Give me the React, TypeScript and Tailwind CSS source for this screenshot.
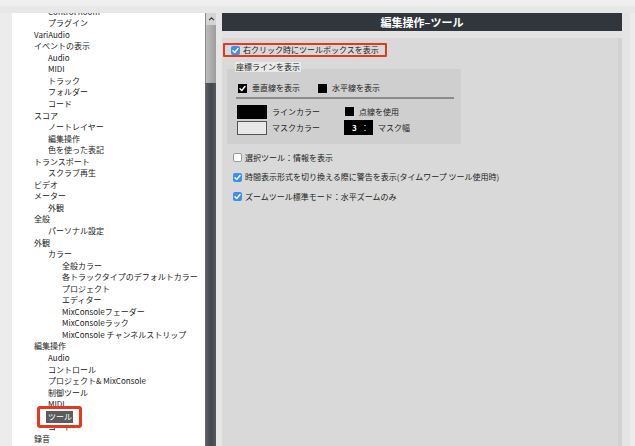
import type { ReactNode } from "react";

const font = { fontFamily: "'Noto Sans CJK JP', 'Noto Sans', sans-serif" };

const treeItems: Array<[string, number]> = [
  ["Control Room", 2],
  ["プラグイン", 2],
  ["VariAudio", 1],
  ["イベントの表示", 1],
  ["Audio", 2],
  ["MIDI", 2],
  ["トラック", 2],
  ["フォルダー", 2],
  ["コード", 2],
  ["スコア", 1],
  ["ノートレイヤー", 2],
  ["編集操作", 2],
  ["色を使った表記", 2],
  ["トランスポート", 1],
  ["スクラブ再生", 2],
  ["ビデオ", 1],
  ["メーター", 1],
  ["外観", 2],
  ["全般", 1],
  ["パーソナル設定", 2],
  ["外観", 1],
  ["カラー", 2],
  ["全般カラー", 3],
  ["各トラックタイプのデフォルトカラー", 3],
  ["プロジェクト", 3],
  ["エディター", 3],
  ["MixConsoleフェーダー", 3],
  ["MixConsoleラック", 3],
  ["MixConsole チャンネルストリップ", 3],
  ["編集操作", 1],
  ["Audio", 2],
  ["コントロール", 2],
  ["プロジェクト& MixConsole", 2],
  ["制御ツール", 2],
  ["MIDI", 2],
  ["ツール", 2],
  ["コード", 2],
  ["録音", 1]
];

const indent: Record<number, string> = {
  1: "pl-[22px]",
  2: "pl-[36px]",
  3: "pl-[50px]"
};

function Check({ color = "white" }: { color?: string }) {
  return (
    <svg viewBox="0 0 10 10" className="h-full w-full">
      <path
        d="M2.2 5.2 L4.2 7.2 L7.8 2.8"
        fill="none"
        stroke={color}
        strokeWidth="1.6"
        strokeLinecap="round"
        strokeLinejoin="round"
      />
    </svg>
  );
}

function BlueBox({ checked }: { checked: boolean }) {
  return checked ? (
    <span className="flex h-[9px] w-[9px] shrink-0 rounded-[2px] bg-[#3d8ef2]">
      <Check />
    </span>
  ) : (
    <span className="h-[9px] w-[9px] shrink-0 rounded-[2px] border border-[#9a9a9a] bg-white" />
  );
}

function OptionRow({ checked, children }: { checked: boolean; children: ReactNode }) {
  return (
    <div className="flex h-[19.5px] items-center gap-[2px] pl-[10px] text-[8px] text-[#222]">
      <BlueBox checked={checked} />
      <span className="ml-[1px]">{children}</span>
    </div>
  );
}

function TreePanel() {
  return (
    <div className="relative h-full w-[193px] overflow-hidden bg-white" style={font}>
      <div className="mt-[-7.4px]">
        {treeItems.map(([label, level], i) => (
          <div
            key={i}
            className={`h-[11.56px] whitespace-nowrap text-[8px] leading-[11.56px] text-[#222] ${indent[level]}`}
          >
            {label}
          </div>
        ))}
      </div>
      <div className="absolute left-[25px] top-[393px] h-[22px] w-[45px] rounded-[3px] border-[3px] border-[#e8361f] bg-white">
        <div className="ml-[6px] mt-[2px] h-[12px] w-[27px] bg-[#5c5c5c] pl-[2px] text-[8px] leading-[12px] text-white">
          ツール
        </div>
      </div>
    </div>
  );
}

function Scrollbar() {
  return (
    <div className="flex h-full w-[11px] flex-col">
      <div className="flex h-[12px] items-center justify-center border-l border-[#8a8a8a] bg-[#d4d4d4] text-[8px] leading-none text-[#333]">
        <svg viewBox="0 0 8 5" className="h-[4px] w-[7px]">
          <path d="M1 4 L4 1 L7 4" fill="none" stroke="#333" strokeWidth="1.3" />
        </svg>
      </div>
      <div className="h-[58px] border-l border-[#8a8a8a] bg-gradient-to-r from-[#bcbcbc] to-[#9c9c9c]" />
      <div className="flex-1 border-l border-[#6a6a6a] bg-gradient-to-r from-[#5a5d63] via-[#44474d] to-[#55585e]" />
    </div>
  );
}

function Legend() {
  return (
    <div className="relative ml-[4px] mt-[12px] h-[75px] w-[234px] rounded-[2px] bg-[#cfcfcf] text-[8px] text-[#222]">
      <div className="absolute left-[8px] top-[-7px] bg-[#e9e9e9] px-[1px] leading-[10px]">
        座標ラインを表示
      </div>
      <div className="flex h-[28px] items-center pl-[11px] pt-[10px]">
        <span className="flex h-[9px] w-[9px] bg-black">
          <Check />
        </span>
        <span className="ml-[5px] w-[66px]">垂直線を表示</span>
        <span className="h-[9px] w-[9px] bg-black" />
        <span className="ml-[5px]">水平線を表示</span>
      </div>
      <div className="ml-[9px] h-[2px] w-[218px] bg-[#8c8c8c]" />
      <div className="mt-[5px] flex h-[15px] items-center pl-[10px]">
        <span className="h-[14px] w-[30px] bg-black" />
        <span className="ml-[5px] w-[73px]">ラインカラー</span>
        <span className="h-[9px] w-[9px] bg-black" />
        <span className="ml-[5px]">点線を使用</span>
      </div>
      <div className="mt-[1px] flex h-[15px] items-center pl-[10px]">
        <span className="h-[14px] w-[30px] border border-[#555] bg-[#e8e8e8]" />
        <span className="ml-[5px] w-[72px]">マスクカラー</span>
        <span className="flex h-[15px] w-[29px] items-center bg-black pl-[8px] text-[8px] font-bold text-white">
          3
          <span className="ml-[7px] flex flex-col gap-[4px]">
            <span className="h-[1px] w-[2px] bg-[#888]" />
            <span className="h-[1px] w-[2px] bg-[#888]" />
          </span>
        </span>
        <span className="ml-[5px]">マスク幅</span>
      </div>
    </div>
  );
}

function SettingsPanel() {
  return (
    <div className="flex h-full w-[400px] flex-col" style={font}>
      <div className="flex h-[18px] items-center justify-center bg-[#30363b] text-[11px] font-bold text-white">
        編集操作–ツール
      </div>
      <div className="h-[7px] bg-[#e3e3e3]" />
      <div className="flex flex-1">
        <div className="flex-1 bg-[#d9d9d9] pl-[1px] pt-[5px]">
          <div className="flex h-[14px] w-[164px] items-center rounded-[1px] border-[2.5px] border-[#e8361f] pl-[6px] text-[8px] text-[#222]">
            <BlueBox checked />
            <span className="ml-[3px]">右クリック時にツールボックスを表示</span>
          </div>
          <Legend />
          <div className="mt-[4px]">
            <OptionRow checked={false}>選択ツール：情報を表示</OptionRow>
            <OptionRow checked>
              時間表示形式を切り換える際に警告を表示(タイムワープ ツール使用時)
            </OptionRow>
            <OptionRow checked>ズームツール標準モード：水平ズームのみ</OptionRow>
          </div>
        </div>
        <div className="w-[4px] bg-[#d2d2d2]" />
      </div>
    </div>
  );
}

export default function App() {
  return (
    <div className="h-[446px] w-[635px] overflow-hidden bg-[#ececec]">
      <div className="h-[6px] bg-[#efefef]" />
      <div className="h-[7px] bg-[#e7e7e7]" />
      <div className="flex h-[433px]">
        <div className="w-[12px]" />
        <TreePanel />
        <Scrollbar />
        <div className="w-[6px] bg-[#e6e6e6]" />
        <SettingsPanel />
        <div className="w-[8px] bg-[#e4e4e4]" />
      </div>
    </div>
  );
}
